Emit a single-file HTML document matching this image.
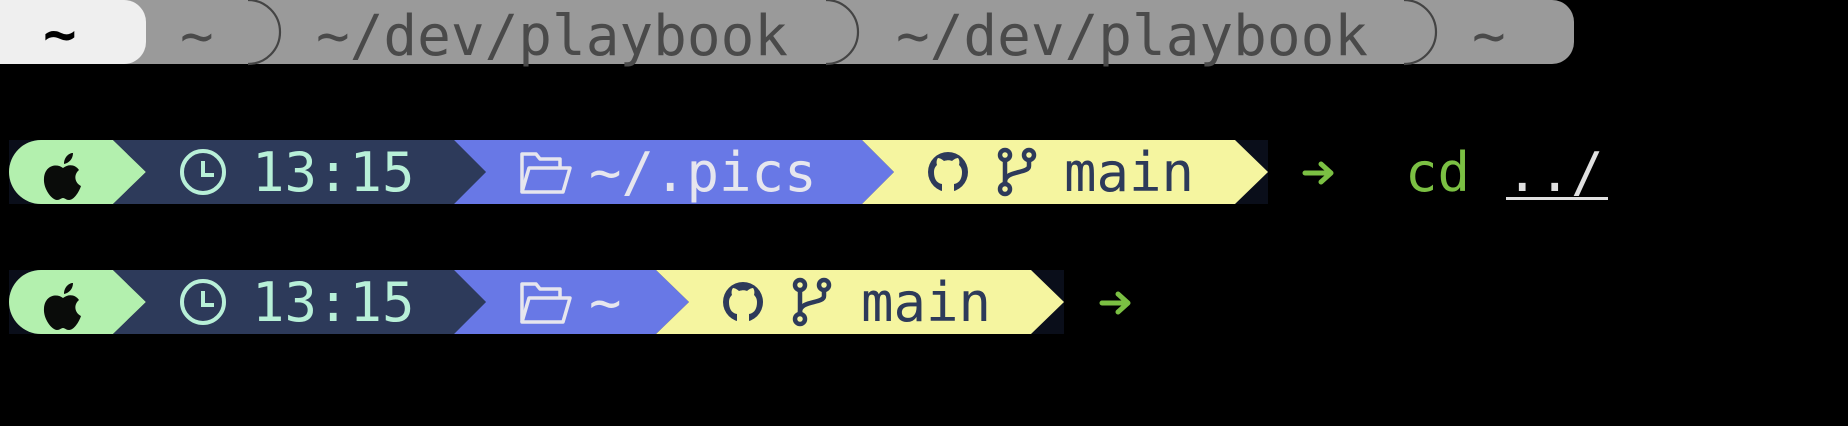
<!DOCTYPE html>
<html><head><meta charset="utf-8"><style>
html,body{margin:0;padding:0;background:#000;width:1848px;height:426px;overflow:hidden}
.t{position:absolute;font-family:"DejaVu Sans Mono","Liberation Mono",monospace;white-space:pre;line-height:1}
</style></head><body>
<svg width="1848" height="426" style="position:absolute;left:0;top:0">
  <path d="M0,0 H1552 A22,22 0 0 1 1574,22 V42 A22,22 0 0 1 1552,64 H0 Z" fill="#9a9a9a"/>
  <path d="M0,0 H124 A22,22 0 0 1 146,22 V42 A22,22 0 0 1 124,64 H0 Z" fill="#efefef"/>
  <g fill="none" stroke="#444" stroke-width="2.2">
    <path d="M248,0 A32,32 0 0 1 248,64"/>
    <path d="M826,0 A32,32 0 0 1 826,64"/>
    <path d="M1404,0 A32,32 0 0 1 1404,64"/>
  </g>
  <g transform="translate(0,140)">
    <rect x="9" y="0" width="1259" height="64" fill="#0a0e1a"/>
    <path d="M41,0 H113 L146,32 L113,64 H41 A32,32 0 0 1 41,0 Z" fill="#b3f0ae"/>
    <path d="M113,0 H454 L486,32 L454,64 H113 L146,32 Z" fill="#2d3a5a"/>
    <path d="M454,0 H862 L894,32 L862,64 H454 L486,32 Z" fill="#6878e6"/>
    <path d="M862,0 H1235 L1268,32 L1235,64 H862 L894,32 Z" fill="#f5f5a0"/>
  </g>
  <g transform="translate(0,270)">
    <rect x="9" y="0" width="1055" height="64" fill="#0a0e1a"/>
    <path d="M41,0 H113 L146,32 L113,64 H41 A32,32 0 0 1 41,0 Z" fill="#b3f0ae"/>
    <path d="M113,0 H454 L486,32 L454,64 H113 L146,32 Z" fill="#2d3a5a"/>
    <path d="M454,0 H656 L689,32 L656,64 H454 L486,32 Z" fill="#6878e6"/>
    <path d="M656,0 H1031 L1064,32 L1031,64 H656 L689,32 Z" fill="#f5f5a0"/>
  </g>
  <defs>
    <g id="apple"><path d="M0,-4 C-6,-9 -18,-7 -19,6 C-20,17 -11,28 -6,28 C-3,28 -2,26 0,26 C2,26 3,28 6,28 C11,28 16,20 18,14 C12,11 10,3 16,-2 C12,-8 5,-8 0,-4 Z M1,-8 C1,-15 6,-19 10,-19 C10,-13 6,-9 1,-8 Z" fill="#0a0c0a"/></g>
    <g id="clock" fill="none" stroke="#b8f0d8" stroke-width="4"><circle cx="0" cy="0" r="21"/><path d="M0,-11 V3 H11"/></g>
    <g id="folder" fill="none" stroke="#e6e6ee" stroke-width="3.5" stroke-linejoin="round"><path d="M-23,20 V-18 H-9 L-5,-13 H15 V-5"/><path d="M-23,20 L-16,-4 H25 L18,20 Z"/></g>
    <g id="gh"><circle cx="0" cy="0" r="20" fill="#2d3a5a"/><path d="M-6,20 V12 C-12,11 -14,6 -14,0 C-14,-4 -12,-6 -11,-7 C-12,-10 -11,-13 -10,-14 C-8,-14 -5,-12 -4,-11 C-1,-12 2,-12 4,-11 C5,-12 8,-14 10,-14 C11,-13 12,-10 11,-7 C12,-6 14,-4 14,0 C14,6 12,11 6,12 V20 Z" fill="#f5f5a0"/><path d="M-6,16 C-10,16 -12,12 -14,11" stroke="#2d3a5a" stroke-width="3" fill="none"/></g>
    <g id="br" fill="none" stroke="#2d3a5a" stroke-width="4.5"><circle cx="-12" cy="-17" r="5"/><circle cx="-12" cy="17" r="5"/><circle cx="12" cy="-17" r="5"/><path d="M-12,-12 V12"/><path d="M12,-12 V-6 C12,2 -12,-2 -12,10"/></g>
    <g id="arr" fill="none" stroke="#7bc043" stroke-width="5" stroke-linecap="round" stroke-linejoin="round"><path d="M-13,0 H13 M3,-9 L13,0 L3,9"/></g>
  </defs>
  <use href="#apple" x="63" y="172"/>
  <use href="#apple" x="63" y="302"/>
  <use href="#clock" x="203" y="172"/>
  <use href="#clock" x="203" y="302"/>
  <use href="#folder" x="545" y="172"/>
  <use href="#folder" x="545" y="302"/>
  <use href="#gh" x="948" y="172"/>
  <use href="#br" x="1017" y="172"/>
  <use href="#gh" x="743" y="302"/>
  <use href="#br" x="812" y="302"/>
  <use href="#arr" x="1318" y="173"/>
  <use href="#arr" x="1115" y="303"/>
  <rect x="1506" y="197" width="102" height="3" fill="#e0e0e0"/>
</svg>
<div class="t" style="left:43px;top:7px;font-size:56px;color:#000;font-weight:bold">~</div>
<div class="t" style="left:180px;top:9px;font-size:56px;color:#4a4a4a">~</div>
<div class="t" style="left:316px;top:9px;font-size:56px;color:#4a4a4a">~/dev/playbook</div>
<div class="t" style="left:896px;top:9px;font-size:56px;color:#4a4a4a">~/dev/playbook</div>
<div class="t" style="left:1472px;top:9px;font-size:56px;color:#4a4a4a">~</div>
<div class="t" style="left:252px;top:146px;font-size:54px;color:#b8f0d8">13:15</div>
<div class="t" style="left:589px;top:146px;font-size:54px;color:#e6e6ee">~/.pics</div>
<div class="t" style="left:1064px;top:146px;font-size:54px;color:#2d3a5a">main</div>
<div class="t" style="left:1405px;top:146px;font-size:54px;color:#7bc043">cd</div>
<div class="t" style="left:1506px;top:146px;font-size:54px;color:#e0e0e0">../</div>
<div class="t" style="left:252px;top:276px;font-size:54px;color:#b8f0d8">13:15</div>
<div class="t" style="left:589px;top:276px;font-size:54px;color:#e6e6ee">~</div>
<div class="t" style="left:861px;top:276px;font-size:54px;color:#2d3a5a">main</div>
</body></html>
